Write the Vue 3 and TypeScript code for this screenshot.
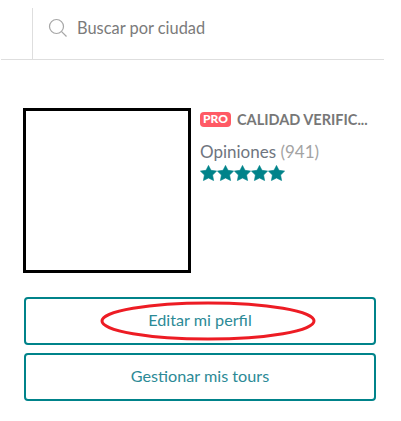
<script setup lang="ts">
const stars = [1, 2, 3, 4, 5]
</script>

<template>
  <div class="page">
    <header class="topbar">
      <div class="search">
        <svg class="search__icon" width="20" height="20" viewBox="0 0 20 20" fill="none">
          <circle cx="8.5" cy="8.5" r="7" stroke="#a6a6a6" stroke-width="1.2" />
          <path d="M13.6 13.6 L18.5 18.5" stroke="#a6a6a6" stroke-width="1.2" />
        </svg>
        <span class="search__text">Buscar por ciudad</span>
      </div>
    </header>

    <section class="profile">
      <div class="avatar"></div>
      <div class="info">
        <div class="title">
          <span class="badge">PRO</span>
          <span class="title__text">CALIDAD VERIFIC...</span>
        </div>
        <div class="reviews">Opiniones <span class="reviews__count">(941)</span></div>
        <div class="stars">
          <svg v-for="s in stars" :key="s" width="17" height="16" viewBox="0 0 17 16">
            <path d="M8.5 0.4 L11 5.3 L16.6 6.1 L12.6 10 L13.6 15.6 L8.5 13 L3.4 15.6 L4.4 10 L0.4 6.1 L6 5.3 Z" fill="#00838a" stroke="#00838a" stroke-linejoin="round" stroke-width="0.6" />
          </svg>
        </div>
      </div>
    </section>

    <div class="actions">
      <button class="btn">
        Editar mi perfil
        <svg class="btn__circle" width="216" height="40" viewBox="0 0 216 40" fill="none">
          <ellipse cx="108" cy="20" rx="106" ry="18" stroke="#ed1c24" stroke-width="3" />
        </svg>
      </button>
      <button class="btn">Gestionar mis tours</button>
    </div>
  </div>
</template>

<style>
body {
  background: #fff;
}
</style>

<style scoped>
.page {
  width: 401px;
  height: 421px;
  overflow: hidden;
  font-family: Lato, "Noto Sans", sans-serif;
}

.topbar {
  width: 383px;
  height: 60px;
  margin-left: 1px;
  padding-top: 8px;
  box-sizing: border-box;
  border-bottom: 1px solid #dedede;
}

.search {
  display: flex;
  align-items: center;
  height: 51px;
  margin-left: 31px;
  padding: 0 0 12px 15px;
  box-sizing: border-box;
  border-left: 1px solid #dedede;
}

.search__icon {
  margin-right: 9px;
}

.search__text {
  font-size: 16.4px;
  color: #7b7b7b;
}

.profile {
  display: flex;
  margin: 48px 0 0 23px;
}

.avatar {
  width: 168px;
  height: 165px;
  box-sizing: border-box;
  border: 3px solid #000;
  background: #fff;
}

.info {
  margin-left: 9px;
  padding-top: 3px;
}

.title {
  display: flex;
  align-items: center;
  height: 16px;
}

.badge {
  width: 31px;
  height: 15px;
  border-radius: 4px;
  background: #ff5a65;
  color: #fff;
  font-size: 12px;
  font-weight: 900;
  line-height: 14px;
  text-align: center;
}

.title__text {
  margin-left: 6px;
  font-size: 14.5px;
  font-weight: 700;
  color: #777;
  white-space: nowrap;
}

.reviews {
  margin-top: 15px;
  font-size: 17px;
  line-height: 20px;
  color: #6f7580;
}

.reviews__count {
  color: #a3a3a3;
}

.stars {
  display: flex;
  margin-top: 3px;
}

.actions {
  display: flex;
  flex-direction: column;
  gap: 8px;
  width: 352px;
  margin: 24px 0 0 24px;
}

.btn {
  position: relative;
  height: 48px;
  padding: 0 0 3px;
  border: 2px solid #00838a;
  border-radius: 4px;
  background: #fff;
  color: #2c8a96;
  font-family: inherit;
  font-size: 16.2px;
}

.btn__circle {
  position: absolute;
  left: 74px;
  top: 2px;
}
</style>
